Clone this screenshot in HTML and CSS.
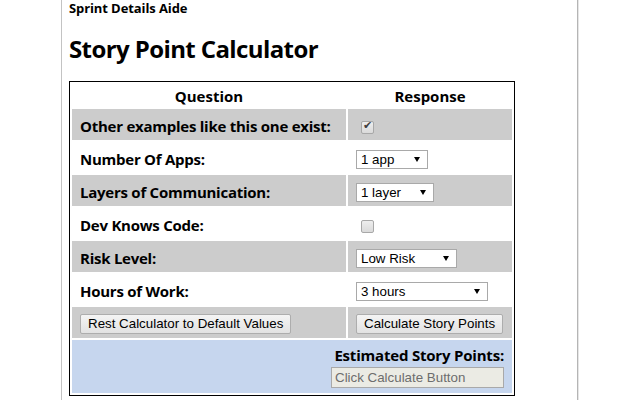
FILE: index.html
```html
<!DOCTYPE html>
<html>
<head>
    <title>Sprint Details Aide</title>
    <link rel="stylesheet" href="styles.css">
</head>
<body>
    <div class="popup">
        <div class="app-title">Sprint Details Aide</div>
        <h2>Story Point Calculator</h2>

        <table class="calculator">
            <colgroup>
                <col class="col-question">
                <col class="col-response">
            </colgroup>
            <tr>
                <th>Question</th>
                <th>Response</th>
            </tr>
            <tr class="shaded">
                <td class="question">Other examples like this one exist:</td>
                <td><input type="checkbox" id="examplesExist" checked></td>
            </tr>
            <tr>
                <td class="question">Number Of Apps:</td>
                <td>
                    <span class="select-wrap">
                        <select id="numApps" class="sel-apps">
                            <option>1 app</option>
                            <option>2 apps</option>
                            <option>3+ apps</option>
                        </select>
                    </span>
                </td>
            </tr>
            <tr class="shaded">
                <td class="question">Layers of Communication:</td>
                <td>
                    <span class="select-wrap">
                        <select id="numLayers" class="sel-layers">
                            <option>1 layer</option>
                            <option>2 layers</option>
                            <option>3+ layers</option>
                        </select>
                    </span>
                </td>
            </tr>
            <tr>
                <td class="question">Dev Knows Code:</td>
                <td><input type="checkbox" id="devKnowsCode"></td>
            </tr>
            <tr class="shaded">
                <td class="question">Risk Level:</td>
                <td>
                    <span class="select-wrap">
                        <select id="riskLevel" class="sel-risk">
                            <option>Low Risk</option>
                            <option>Medium Risk</option>
                            <option>High Risk</option>
                        </select>
                    </span>
                </td>
            </tr>
            <tr>
                <td class="question">Hours of Work:</td>
                <td>
                    <span class="select-wrap">
                        <select id="hoursOfWork" class="sel-hours">
                            <option>3 hours</option>
                            <option>1 day</option>
                            <option>2-3 days</option>
                            <option>1 week</option>
                        </select>
                    </span>
                </td>
            </tr>
            <tr class="shaded">
                <td><button type="button">Rest Calculator to Default Values</button></td>
                <td><button type="button">Calculate Story Points</button></td>
            </tr>
            <tr class="result">
                <td colspan="2">
                    <div class="result-label">Estimated Story Points:</div>
                    <input type="text" id="storyPoints" value="Click Calculate Button" readonly>
                </td>
            </tr>
        </table>
    </div>
</body>
</html>
```

FILE: styles.css
```css
html, body {
    margin: 0;
    height: 100%;
    background-color: #fff;
}
body {
    font-family: "Open Sans", sans-serif;
    color: #000;
}
.popup {
    box-sizing: border-box;
    width: 517px;
    height: 100%;
    margin-left: 61px;
    padding-left: 7px;
    border-left: 1px solid #c3c3c3;
    border-right: 1px solid #b5b5b5;
    box-shadow: 1px 0 0 #e6e6e6;
}
.app-title {
    font-size: 13px;
    font-weight: bold;
    line-height: 17px;
    letter-spacing: -0.1px;
}
h2 {
    margin: 16px 0 16px;
    font-size: 24px;
    line-height: 32px;
    letter-spacing: -0.6px;
}
.calculator {
    table-layout: fixed;
    width: 446px;
    border: 1px solid #000;
    border-spacing: 2px;
}
.col-question {
    width: 274px;
}
.col-response {
    width: 164px;
}
th {
    height: 23px;
    padding: 0;
    font-size: 15px;
    line-height: 20px;
    text-align: center;
}
td {
    height: 31px;
    padding: 0 8px;
    vertical-align: middle;
}
td.question {
    height: 29px;
    padding-top: 2px;
    font-size: 15px;
    font-weight: bold;
    letter-spacing: -0.25px;
    white-space: nowrap;
}
.shaded td {
    background-color: #cccccc;
}
.result td {
    height: auto;
    padding: 5px 8px 5px;
    background-color: #c6d6ee;
    text-align: right;
}
.result-label {
    font-size: 15px;
    font-weight: bold;
    line-height: 20px;
    letter-spacing: -0.2px;
}

/* form controls */
select,
button,
input[type="text"] {
    font-family: "Liberation Sans", Arial, sans-serif;
    font-size: 13.33px;
    color: #000;
}
.select-wrap {
    position: relative;
    display: inline-block;
    vertical-align: middle;
}
.select-wrap::after {
    content: "";
    position: absolute;
    top: 7px;
    right: 8px;
    border-left: 3px solid transparent;
    border-right: 3px solid transparent;
    border-top: 5px solid #000;
    pointer-events: none;
}
select {
    -webkit-appearance: none;
    appearance: none;
    box-sizing: border-box;
    display: block;
    height: 19px;
    margin: 0;
    padding: 0 0 0 4px;
    border: 1px solid #a9a9a9;
    border-radius: 0;
    background-color: #fff;
    line-height: 17px;
}
.sel-apps { width: 72px; }
.sel-layers { width: 78px; }
.sel-risk { width: 101px; }
.sel-hours { width: 132px; }

input[type="checkbox"] {
    -webkit-appearance: none;
    appearance: none;
    position: relative;
    box-sizing: border-box;
    width: 13px;
    height: 13px;
    margin: 2px 0 0 5px;
    vertical-align: middle;
    border: 1px solid #a8a8a8;
    border-radius: 2px;
    background: linear-gradient(#eeeeee, #dadada);
}
input[type="checkbox"]:checked::before {
    content: "\2714";
    position: absolute;
    top: -3px;
    left: 1px;
    font-family: "DejaVu Sans", sans-serif;
    font-size: 11px;
    color: #3f3f3f;
}
button {
    box-sizing: border-box;
    height: 20px;
    margin: 0;
    padding: 0 7px;
    border: 1px solid #adadad;
    border-radius: 2px;
    background: linear-gradient(#f4f4f4, #e2e2e2);
    vertical-align: middle;
    cursor: pointer;
}
input[type="text"] {
    box-sizing: border-box;
    display: block;
    width: 173px;
    height: 21px;
    margin: 2px 0 0 auto;
    padding: 0 3px;
    border: 1px solid #a9a9a9;
    background-color: #ebebe4;
    color: #6d6d6d;
}
```
